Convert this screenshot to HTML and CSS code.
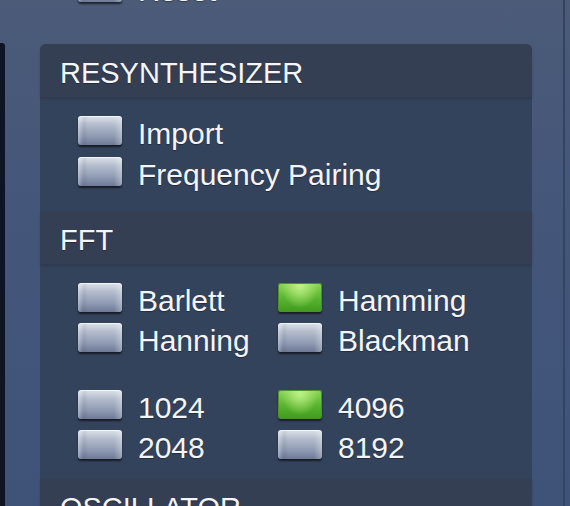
FILE: index.html
```html
<!DOCTYPE html>
<html lang="en">
<head>
  <meta charset="UTF-8">
  <meta name="viewport" content="width=device-width, initial-scale=1.0">
  <title>Synth Settings</title>
  <link rel="stylesheet" href="styles.css">
</head>
<body>

<div class="screen">
  <div class="edge-left"></div>

  <div class="main">
    <div class="row reset-row">
      <span class="check"></span>
      <span class="label">Reset</span>
    </div>

    <section class="panel">
      <h2 class="panel-head">RESYNTHESIZER</h2>
      <div class="panel-body body-resynth">
        <div class="row"><span class="check"></span><span class="label">Import</span></div>
        <div class="row"><span class="check"></span><span class="label">Frequency Pairing</span></div>
      </div>

      <h2 class="panel-head">FFT</h2>
      <div class="panel-body body-fft">
        <div class="grid">
          <div class="row"><span class="check"></span><span class="label">Barlett</span></div>
          <div class="row"><span class="check on"></span><span class="label">Hamming</span></div>
          <div class="row"><span class="check"></span><span class="label">Hanning</span></div>
          <div class="row"><span class="check"></span><span class="label">Blackman</span></div>
        </div>
        <div class="grid">
          <div class="row"><span class="check"></span><span class="label">1024</span></div>
          <div class="row"><span class="check on"></span><span class="label">4096</span></div>
          <div class="row"><span class="check"></span><span class="label">2048</span></div>
          <div class="row"><span class="check"></span><span class="label">8192</span></div>
        </div>
      </div>

      <h2 class="panel-head">OSCILLATOR</h2>
      <div class="panel-body body-osc"></div>
    </section>
  </div>

  <div class="edge-right"></div>
</div>

</body>
</html>
```

FILE: styles.css
```css
html, body {
  margin: 0;
  padding: 0;
  height: 100%;
  overflow: hidden;
}
body {
  font-family: "Liberation Sans", Arial, Helvetica, sans-serif;
  color: #f3f5f9;
  background: linear-gradient(#4b5b78, #44567a 40%, #3f5379);
}
.screen {
  display: flex;
  height: 506px;
  overflow: hidden;
}
.edge-left {
  width: 5px;
  margin-top: 43px;
  background-color: #0e1424;
  border-top-right-radius: 3px;
}
.main {
  width: 527px;
  padding-left: 35px;
}
.edge-right {
  width: 2px;
  margin-left: auto;
  margin-right: 5px;
  background-color: #34445f;
}

/* rows: checkbox + label */
.row {
  display: flex;
  align-items: flex-start;
  height: 29px;
}
.reset-row {
  margin-top: -27px;
  padding-left: 38px;
}
.check {
  flex: none;
  width: 44px;
  height: 29px;
  border-radius: 3px;
  background:
    linear-gradient(to right, rgba(255,255,255,.3) 0, rgba(255,255,255,0) 4px, rgba(0,0,0,.06) 6px, rgba(0,0,0,0) 10px, rgba(0,0,0,0) 36px, rgba(255,255,255,.3) 44px),
    linear-gradient(#dde3ec, #b4bdcd 30%, #8f9ab3 70%, #6e7a96);
  box-shadow: 0 2px 2px rgba(0, 0, 0, .6), inset 0 1px 0 rgba(255, 255, 255, .7);
}
.check.on {
  background:
    radial-gradient(ellipse at 50% 10%, rgba(196, 245, 140, .9), rgba(196, 245, 140, 0) 60%),
    linear-gradient(#8fd75a, #5cb631 50%, #3f9a1e);
  box-shadow: 0 2px 2px rgba(0, 0, 0, .55), inset 0 0 0 1px #4a9326;
}
.label {
  margin-top: 3px;
  margin-left: 16px;
  font-size: 30px;
  line-height: 29px;
  white-space: nowrap;
  text-shadow: 0 1px 1px rgba(0, 0, 0, .35);
}

/* panel */
.panel {
  width: 492px;
  margin-top: 42px;
  border-radius: 6px 6px 0 0;
  background-color: #34435c;
}
.panel-head {
  margin: 0;
  height: 47px;
  padding: 6px 0 0 20px;
  font-size: 29px;
  font-weight: normal;
  line-height: 47px;
  background-color: #353f54;
  box-shadow: 0 2px 3px rgba(0, 0, 0, .15);
  text-shadow: 0 1px 1px rgba(0, 0, 0, .35);
}
.panel-head:first-child {
  border-radius: 6px 6px 0 0;
}
.panel-body {
  padding-left: 38px;
}
.body-resynth {
  display: flex;
  flex-direction: column;
  gap: 12px;
  padding-top: 19px;
  padding-bottom: 25px;
}
.body-fft {
  display: flex;
  flex-direction: column;
  gap: 38px;
  padding-top: 19px;
  padding-bottom: 20px;
}
.grid {
  display: grid;
  grid-template-columns: 200px 200px;
  row-gap: 11px;
}
.body-osc {
  height: 60px;
}
```
